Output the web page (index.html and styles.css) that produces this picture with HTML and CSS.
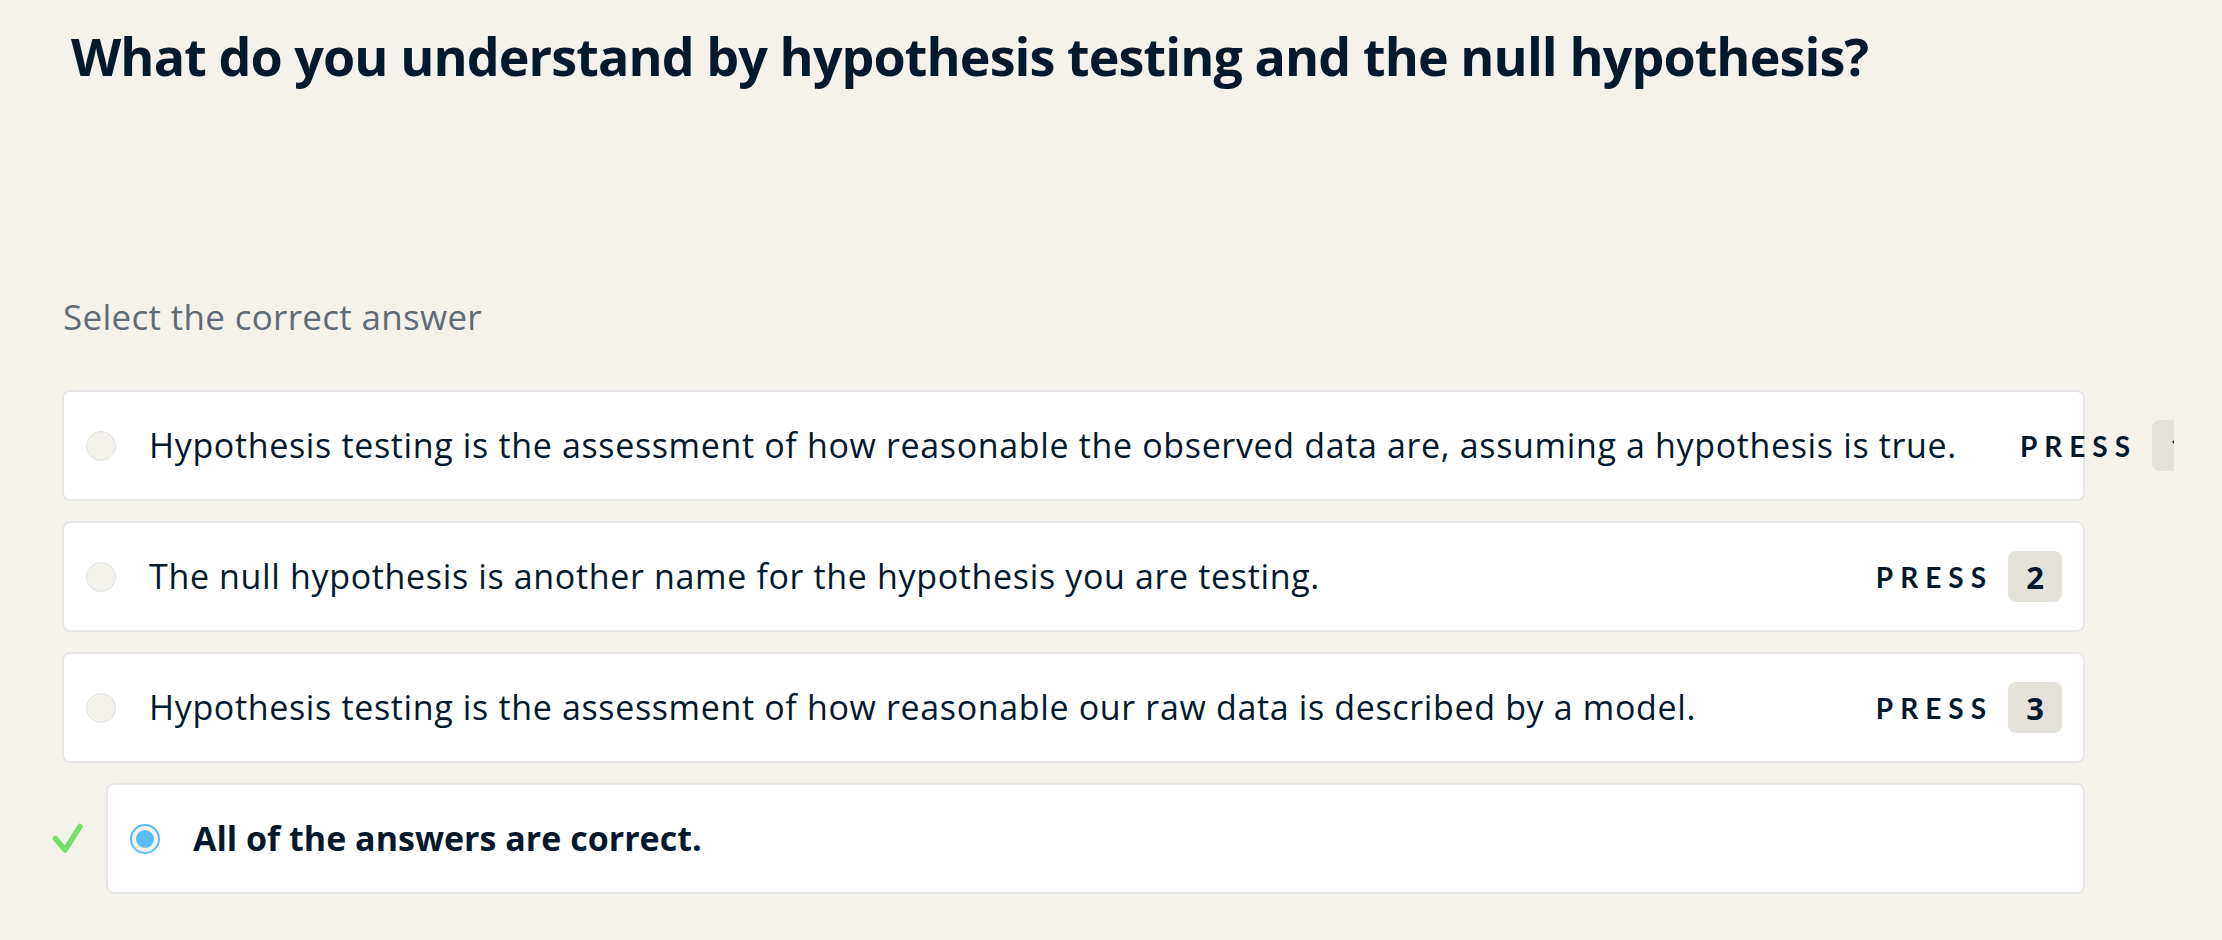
FILE: index.html
```html
<!DOCTYPE html>
<html lang="en">
<head>
<meta charset="utf-8">
<title>Hypothesis testing question</title>
<link rel="stylesheet" href="styles.css">
</head>
<body>
<main class="page">
  <h1 class="question">What do you understand by hypothesis testing and the null hypothesis?</h1>
  <p class="prompt">Select the correct answer</p>
  <ul class="options">
    <li class="option">
      <span class="radio"></span>
      <span class="label">Hypothesis testing is the assessment of how reasonable the observed data are, assuming a hypothesis is true.</span>
      <span class="shortcut"><span class="press">PRESS</span><kbd class="key">1</kbd></span>
    </li>
    <li class="option">
      <span class="radio"></span>
      <span class="label">The null hypothesis is another name for the hypothesis you are testing.</span>
      <span class="shortcut"><span class="press">PRESS</span><kbd class="key">2</kbd></span>
    </li>
    <li class="option">
      <span class="radio"></span>
      <span class="label">Hypothesis testing is the assessment of how reasonable our raw data is described by a model.</span>
      <span class="shortcut"><span class="press">PRESS</span><kbd class="key">3</kbd></span>
    </li>
    <li class="selected-row">
      <svg class="check" viewBox="0 0 31 31" width="31" height="31" aria-hidden="true">
        <path d="M3.5 15.5 L13 27 L28 3.5" fill="none" stroke="#74e06c" stroke-width="5.5" stroke-linecap="round" stroke-linejoin="round"/>
      </svg>
      <div class="option selected">
        <span class="radio radio-on"><span class="dot"></span></span>
        <span class="label">All of the answers are correct.</span>
      </div>
    </li>
  </ul>
</main>
</body>
</html>
```

FILE: styles.css
```css
html, body {
  margin: 0;
  padding: 0;
  background: #f5f2ec;
}

body {
  font-family: "Open Sans", Lato, sans-serif;
  color: #05192d;
}

.page {
  width: 2174px;
  height: 940px;
  overflow: hidden;
  box-sizing: border-box;
  padding-left: 62px;
}

.question {
  margin: 25px 0 0 9px;
  font-size: 52px;
  line-height: 1.2;
  font-weight: 700;
  letter-spacing: -0.9px;
  white-space: nowrap;
}

.prompt {
  margin: 209px 0 0 1px;
  font-size: 35px;
  line-height: 1.2;
  color: #5f6b76;
  letter-spacing: 0.3px;
}

.options {
  list-style: none;
  margin: 52px 0 0 0;
  padding: 0;
  width: 2023px;
  display: flex;
  flex-direction: column;
  gap: 20px;
}

.option {
  box-sizing: border-box;
  height: 111px;
  display: flex;
  align-items: center;
  padding: 0 21px 0 22px;
  background: #ffffff;
  border: 2px solid #e6e6e8;
  border-radius: 8px;
}

.radio {
  flex: 0 0 auto;
  box-sizing: border-box;
  width: 30px;
  height: 30px;
  border-radius: 50%;
  background: #f3f1ec;
  border: 1.5px solid #e2e0db;
  margin-right: 33px;
  display: flex;
  align-items: center;
  justify-content: center;
}

.radio-on {
  border: 2px solid #5cbbf6;
  margin-right: 33px;
}

.dot {
  width: 18px;
  height: 18px;
  border-radius: 50%;
  background: #5cbbf6;
}

.label {
  flex: 1 0 auto;
  font-size: 34px;
  line-height: 1.2;
  white-space: nowrap;
  margin-right: 63px;
  letter-spacing: 0.65px;
}

.shortcut {
  flex: 0 0 auto;
  display: flex;
  align-items: center;
}

.press {
  font-family: Lato, "Open Sans", sans-serif;
  font-size: 28px;
  font-weight: 700;
  letter-spacing: 7px;
  margin-right: 15px;
}

.key {
  box-sizing: border-box;
  width: 54px;
  height: 51px;
  border-radius: 8px;
  background: #e5e2dc;
  display: flex;
  align-items: center;
  justify-content: center;
  font-family: "Open Sans", Lato, sans-serif;
  font-size: 31px;
  font-weight: 700;
  color: #05192d;
}

.selected-row {
  display: flex;
  align-items: center;
  gap: 23px;
  margin-left: -10px;
}

.check {
  flex: 0 0 auto;
  display: block;
}

.selected-row .option {
  flex: 1 1 auto;
}

.selected .label {
  font-weight: 700;
  letter-spacing: 0;
}
```
